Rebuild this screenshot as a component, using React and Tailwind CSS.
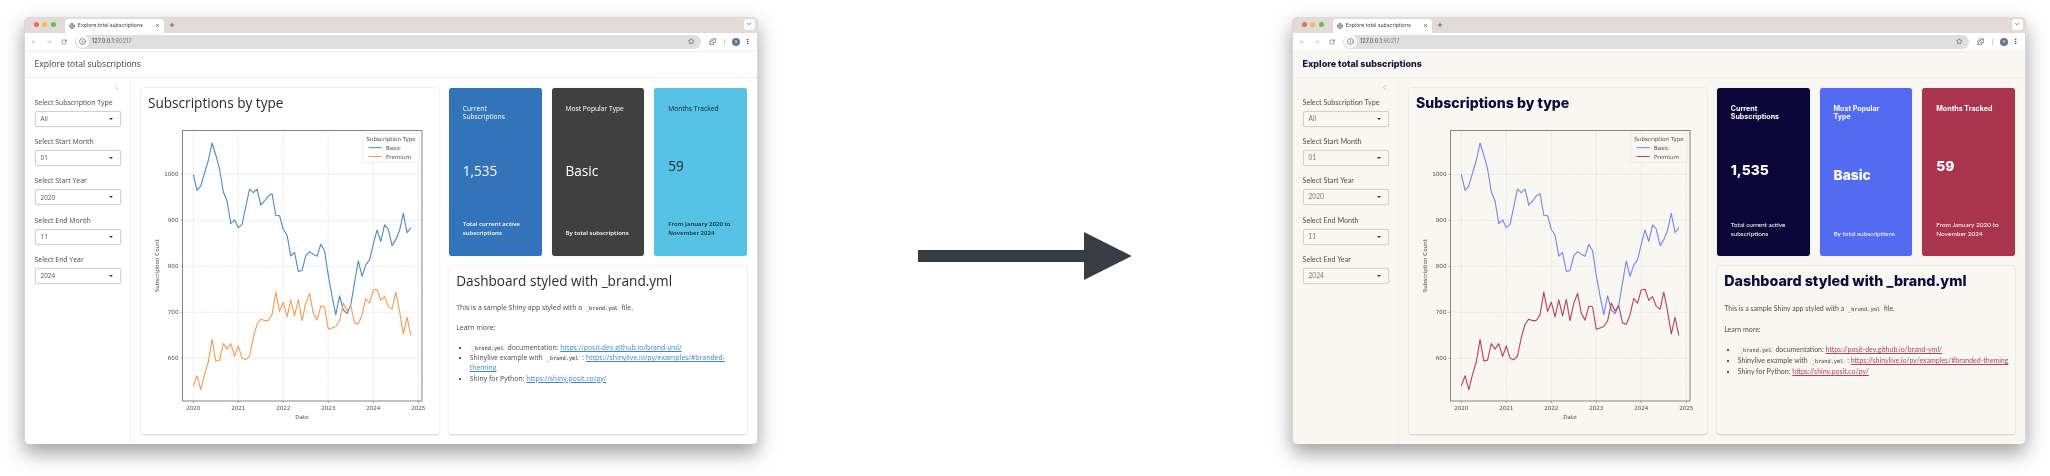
import React from "react";
import { ArrowLeft, ArrowRight, RotateCw, Info, Star, Puzzle, EllipsisVertical, ChevronDown, ChevronLeft, Globe, X, Plus } from "lucide-react";

const BASIC = [1000,965,975,1003,1030,1068,1042,1012,962,942,893,901,884,891,930,968,960,968,933,942,953,958,911,910,880,868,822,830,789,791,823,832,826,822,848,834,780,735,695,736,705,697,716,765,812,778,803,814,848,879,854,890,881,845,858,878,915,873,884];
const PREMIUM = [540,562,532,565,592,641,594,596,632,620,632,604,627,600,597,605,645,674,685,682,682,695,744,702,722,690,727,692,728,682,720,741,698,683,713,712,663,666,669,681,720,703,714,677,674,695,730,720,749,750,726,734,713,707,744,702,653,689,650];

const px = (i) => 52.3 + i * 3.75;
const py = (v) => 54.3 + (1000 - v) * 0.46;
const linePath = (arr) => arr.map((v, i) => `${i ? "L" : "M"}${px(i).toFixed(2)} ${py(v).toFixed(2)}`).join(" ");

const LEFT = {
  page: "bg-white",
  headerText: "text-[#404040] font-['Open_Sans',sans-serif] text-[8.6px] font-normal",
  body: "text-[#4a4a4a] font-['Open_Sans',sans-serif]",
  label: "text-[6.9px]",
  select: "text-[#555] text-[6.4px] bg-white",
  chartTitle: "text-[#2b2b2b] font-['Open_Sans',sans-serif] text-[13.6px] font-normal",
  docTitle: "text-[#2b2b2b] font-['Open_Sans',sans-serif] text-[13.6px] font-normal",
  para: "text-[6.9px]",
  code: "bg-[#f7f7f7] text-[#333]",
  link: "text-[#3f88c9] underline",
  card: "bg-white",
  boxTitle: "font-['Open_Sans',sans-serif] text-[6.7px] font-normal",
  boxValue: "font-['Open_Sans',sans-serif] text-[13.6px] font-normal",
  boxSub: "font-['Open_Sans',sans-serif] text-[6.05px] font-semibold",
  boxes: [
    "bg-[#3373ba] text-white",
    "bg-[#404040] text-white",
    "bg-[#56c2e6] text-[#10242c]",
  ],
  basic: "#4b8ac6",
  premium: "#f59b50",
  popularTitle: "Most Popular Type",
  linkItem: "",
};

const RIGHT = {
  page: "bg-[#f9f7f2]",
  headerText: "text-[#151142] font-['Inter',sans-serif] text-[9px] font-extrabold",
  body: "text-[#4f4f4f] font-['Lato',sans-serif]",
  label: "text-[7.2px]",
  select: "text-[#777] text-[6.6px] bg-[#f9f7f2]",
  chartTitle: "text-[#0d0a3d] font-['Inter',sans-serif] text-[14.1px] font-extrabold",
  docTitle: "text-[#0d0a3d] font-['Inter',sans-serif] text-[14.3px] font-extrabold",
  para: "text-[7px]",
  code: "bg-[#f2f1ec] text-[#444]",
  link: "text-[#b4405c] underline",
  card: "bg-[#f9f7f2]",
  boxTitle: "font-['Inter',sans-serif] text-[7.1px] font-bold",
  boxValue: "font-['Inter',sans-serif] text-[13.8px] font-extrabold",
  boxSub: "font-['Lato',sans-serif] text-[6.5px] font-normal",
  boxes: [
    "bg-[#0a0738] text-white",
    "bg-[#526bf0] text-white",
    "bg-[#a8344e] text-white",
  ],
  basic: "#6f87f3",
  premium: "#b5405f",
  popularTitle: <>Most Popular<br />Type</>,
  linkItem: "whitespace-nowrap",
};

function BrowserChrome() {
  return (
    <>
      <div className="h-[16px] bg-[#e3dbd8] flex items-end pl-[9px] pr-[2px] shrink-0">
        <div className="flex gap-[3.4px] items-center h-[16px]">
          <span className="w-[5px] h-[5px] rounded-full bg-[#ee6a5f]" />
          <span className="w-[5px] h-[5px] rounded-full bg-[#f5bd4f]" />
          <span className="w-[5px] h-[5px] rounded-full bg-[#61c454]" />
        </div>
        <div className="ml-[9px] w-[99px] h-[14px] bg-white rounded-t-[4px] flex items-center px-[4px] gap-[3px]">
          <Globe size={6} color="#444" strokeWidth={2} />
          <span className="text-[5.2px] text-[#444] font-['Inter',sans-serif] flex-1 whitespace-nowrap">Explore total subscriptions</span>
          <X size={5} color="#333" strokeWidth={2.5} />
        </div>
        <div className="h-[16px] flex items-center ml-[5px]">
          <Plus size={6} color="#333" strokeWidth={2.5} />
        </div>
        <div className="ml-auto mb-[3px] w-[11px] h-[11px] bg-white rounded-[3px] flex items-center justify-center">
          <ChevronDown size={6} color="#333" strokeWidth={2.5} />
        </div>
      </div>
      <div className="h-[18px] bg-white flex items-center pl-[6px] pr-[6px] shrink-0">
        <ArrowLeft size={6} color="#aaa" strokeWidth={2} />
        <ArrowRight size={6} color="#aaa" strokeWidth={2} className="ml-[9px]" />
        <RotateCw size={6} color="#444" strokeWidth={2} className="ml-[9px]" />
        <div className="ml-[8px] flex-1 h-[14px] bg-[#dfdfdf] rounded-full flex items-center pr-[6px]">
          <div className="w-[13px] h-[13px] ml-[1px] rounded-full bg-white flex items-center justify-center">
            <Info size={7} color="#444" strokeWidth={2} />
          </div>
          <span className="ml-[3px] text-[5.6px] font-['Inter',sans-serif] font-medium text-[#555]">
            127.0.0.1<span className="text-[#888]">:60217</span>
          </span>
          <Star size={6.5} color="#444" strokeWidth={2} className="ml-auto" />
        </div>
        <Puzzle size={7.5} color="#333" strokeWidth={2} className="ml-[8px]" />
        <span className="ml-[8px] w-px h-[6px] bg-[#ccc]" />
        <span className="ml-[7px] w-[8px] h-[8px] rounded-full bg-[#64798e] text-white text-[4px] flex items-center justify-center font-['Inter',sans-serif]">S</span>
        <EllipsisVertical size={7} color="#333" strokeWidth={2.5} className="ml-[3.5px]" />
      </div>
    </>
  );
}

function Field({ label, value, t }) {
  return (
    <div className="mb-[7.2px]">
      <div className={`h-[16px] leading-[16px] whitespace-nowrap ${t.label}`}>{label}</div>
      <div className={`h-[16px] w-[86px] border border-[#d2d2d2] rounded-[2px] shadow-[0_0_1px_rgba(0,0,0,0.2)] flex items-center justify-between pl-[5px] pr-[7px] ${t.select}`}>
        <span>{value}</span>
        <span className="w-0 h-0 border-x-[2.2px] border-x-transparent border-t-[2.4px] border-t-[#333]" />
      </div>
    </div>
  );
}

function Chart({ t }) {
  const gridX = [52.3, 97.3, 142.3, 187.3, 232.3, 277.3];
  const gridY = [54.3, 100.3, 146.3, 192.3, 238.3];
  const years = ["2020", "2021", "2022", "2023", "2024", "2025"];
  const ticks = ["1000", "900", "800", "700", "600"];
  const ink = "#4d4d4d";
  return (
    <svg width="299" height="314" className="block" fontFamily="'DejaVu Sans', sans-serif">
      {gridX.map((x) => (
        <line key={x} x1={x} x2={x} y1="10.5" y2="281" stroke="#d4d4d4" strokeWidth="0.6" strokeDasharray="1.2 1" />
      ))}
      {gridY.map((y) => (
        <line key={y} x1="41.5" x2="281" y1={y} y2={y} stroke="#d4d4d4" strokeWidth="0.6" strokeDasharray="1.2 1" />
      ))}
      <path d={linePath(BASIC)} fill="none" stroke={t.basic} strokeWidth="1.1" strokeLinejoin="round" />
      <path d={linePath(PREMIUM)} fill="none" stroke={t.premium} strokeWidth="1.1" strokeLinejoin="round" />
      <rect x="41.5" y="10.5" width="239.5" height="270.5" fill="none" stroke="#858585" strokeWidth="1" />
      {gridX.map((x, i) => (
        <g key={x}>
          <line x1={x} x2={x} y1="281" y2="283" stroke="#666" strokeWidth="0.5" />
          <text x={x} y="290" textAnchor="middle" fontSize="5.6" fill={ink}>{years[i]}</text>
        </g>
      ))}
      {gridY.map((y, i) => (
        <g key={y}>
          <line x1="39.5" x2="41.5" y1={y} y2={y} stroke="#666" strokeWidth="0.5" />
          <text x="37.5" y={y + 2} textAnchor="end" fontSize="5.6" fill={ink}>{ticks[i]}</text>
        </g>
      ))}
      <text x="161" y="298.8" textAnchor="middle" fontSize="5.6" fill={ink}>Date</text>
      <text transform="translate(18 145.7) rotate(-90)" textAnchor="middle" fontSize="5.6" fill={ink}>Subscription Count</text>
      <rect x="221.7" y="13.7" width="56.3" height="28.6" rx="1" fill={t.card === "bg-white" ? "#ffffff" : "#f9f7f2"} fillOpacity="0.85" stroke="#dcdcdc" strokeWidth="0.5" />
      <text x="250" y="21" textAnchor="middle" fontSize="5.6" fill={ink}>Subscription Type</text>
      <line x1="227.7" x2="240.7" y1="27.7" y2="27.7" stroke={t.basic} strokeWidth="1" />
      <text x="245" y="29.7" fontSize="5.6" fill={ink}>Basic</text>
      <line x1="227.7" x2="240.7" y1="36.5" y2="36.5" stroke={t.premium} strokeWidth="1" />
      <text x="245" y="38.5" fontSize="5.6" fill={ink}>Premium</text>
    </svg>
  );
}

function ValueBox({ title, value, sub, cls, t }) {
  return (
    <div className={`rounded-[3px] pt-[17.5px] pb-[18px] px-[14px] flex flex-col shadow-[0_0_1px_rgba(0,0,0,0.25)] ${cls}`}>
      <div className={`leading-[8.2px] ${t.boxTitle}`}>{title}</div>
      <div className={`flex-1 flex items-center ${t.boxValue}`}>{value}</div>
      <div className={`leading-[9px] ${t.boxSub}`}>{sub}</div>
    </div>
  );
}

function Code({ t, children }) {
  return <code className={`font-['DejaVu_Sans_Mono',monospace] text-[5.3px] px-[2px] rounded-[1px] ${t.code}`}>{children}</code>;
}

function Dashboard({ t }) {
  return (
    <div className={`w-[733.5px] h-[427px] shrink-0 rounded-[5px] overflow-hidden flex flex-col border-x border-x-[#ddd6d3] shadow-[0_9px_20px_rgba(0,0,0,0.38)] blur-[0.3px] ${t.page}`}>
      <BrowserChrome />
      <div className="h-px bg-[#efefef] shrink-0" />
      <div className={`h-[26px] shrink-0 flex items-center pl-[9.5px] border-b border-b-[#f0efec] ${t.headerText}`}>
        Explore total subscriptions
      </div>
      <div className="flex-1 flex min-h-0">
        <aside className={`w-[106px] shrink-0 border-r border-r-[#f1f0ec] pl-[9.5px] pr-[9px] ${t.body}`}>
          <div className="h-[17.5px] flex items-center justify-end pt-[2px]">
            <ChevronLeft size={9} color="#999" strokeWidth={1.3} />
          </div>
          <Field t={t} label="Select Subscription Type" value="All" />
          <Field t={t} label="Select Start Month" value="01" />
          <Field t={t} label="Select Start Year" value="2020" />
          <Field t={t} label="Select End Month" value="11" />
          <Field t={t} label="Select End Year" value="2024" />
        </aside>
        <main className="flex-1 min-w-0 pl-[9.5px] pr-[9.5px] pt-[10px] pb-[9px] grid grid-cols-2 grid-rows-[168.5px_168px] gap-x-[10px] gap-y-[10px]">
          <section className={`row-span-2 rounded-[3px] shadow-[0_0.5px_2px_rgba(0,0,0,0.18)] overflow-hidden ${t.card}`}>
            <h2 className={`h-[32px] leading-[30px] pl-[7.5px] whitespace-nowrap ${t.chartTitle}`}>Subscriptions by type</h2>
            <Chart t={t} />
          </section>
          <div className="grid grid-cols-3 gap-x-[10px]">
            <ValueBox t={t} cls={t.boxes[0]} title="Current Subscriptions" value="1,535" sub="Total current active subscriptions" />
            <ValueBox t={t} cls={t.boxes[1]} title={t.popularTitle} value="Basic" sub="By total subscriptions" />
            <ValueBox t={t} cls={t.boxes[2]} title="Months Tracked" value="59" sub="From January 2020 to November 2024" />
          </div>
          <section className={`rounded-[3px] shadow-[0_0.5px_2px_rgba(0,0,0,0.18)] px-[7.5px] ${t.card} ${t.body} ${t.para}`}>
            <h2 className={`h-[30px] leading-[30px] whitespace-nowrap ${t.docTitle}`}>Dashboard styled with _brand.yml</h2>
            <p className="mt-[6.5px] leading-[10px]">This is a sample Shiny app styled with a <Code t={t}>_brand.yml</Code> file.</p>
            <p className="mt-[10.3px] leading-[10px]">Learn more:</p>
            <ul className="mt-[10.5px] list-disc pl-[13.5px] leading-[10.1px] marker:text-[#222]">
              <li><Code t={t}>_brand.yml</Code> documentation: <span className={t.link}>https://posit-dev.github.io/brand-yml/</span></li>
              <li className={t.linkItem}>Shinylive example with <Code t={t}>_brand.yml</Code> : <span className={t.link}>https://shinylive.io/py/examples/#branded-theming</span></li>
              <li>Shiny for Python: <span className={t.link}>https://shiny.posit.co/py/</span></li>
            </ul>
          </section>
        </main>
      </div>
    </div>
  );
}

export default function App() {
  return (
    <div className="w-[2050px] h-[476px] bg-white overflow-hidden flex items-start pt-[16.5px] pl-[24px]">
      <Dashboard t={LEFT} />
      <div className="w-[534.5px] shrink-0 flex justify-center mt-[215.5px]">
        <svg width="214" height="48" viewBox="0 0 214 48" className="block">
          <path d="M0 18 H166 V0 L213.7 24 L166 48 V30 H0 Z" fill="#383c43" />
        </svg>
      </div>
      <Dashboard t={RIGHT} />
    </div>
  );
}
